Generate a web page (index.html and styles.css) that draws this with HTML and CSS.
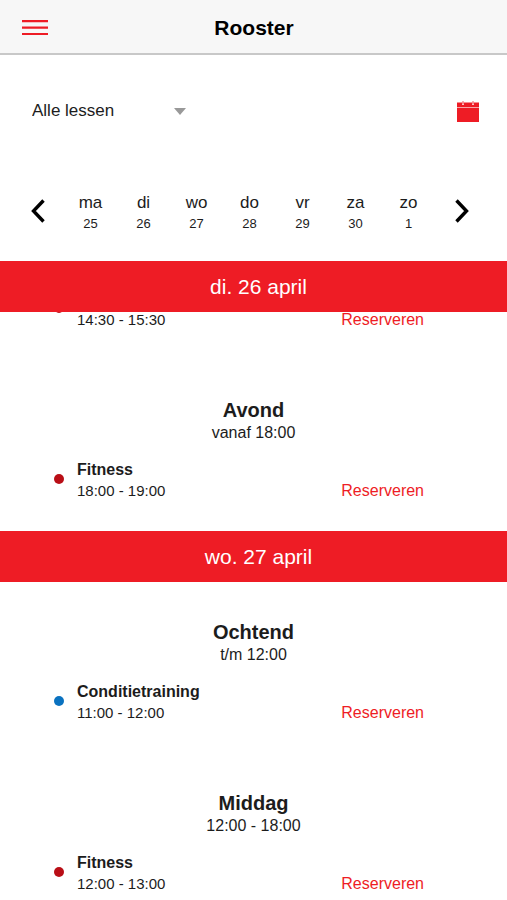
FILE: index.html
```html
<!DOCTYPE html>
<html lang="nl">
<head>
	<meta charset="utf-8">
	<meta name="viewport" content="width=device-width, initial-scale=1">
	<title>Rooster</title>
	<link rel="stylesheet" href="styles.css">
</head>
<body>
	<header class="topbar">
		<button class="menu" type="button" aria-label="Menu">
			<svg width="26" height="16" viewBox="0 0 26 16"><path d="M0 1.2h26M0 7.6h26M0 14h26" stroke="currentColor" stroke-width="2.2"/></svg>
		</button>
		<h1>Rooster</h1>
	</header>

	<div class="filters">
		<div class="lesson-filter">
			<select id="lessons" aria-label="Lessen">
				<option>Alle lessen</option>
			</select>
			<svg class="caret" width="12" height="7" viewBox="0 0 12 7"><path d="M0 0h12L6 7z" fill="#999"/></svg>
		</div>
		<button class="calendar" type="button" aria-label="Kalender">
			<svg width="22" height="21" viewBox="0 0 22 21">
				<path d="M0 1.5h22V21H0z" fill="currentColor"/>
				<path d="M0 6.5h22" stroke="#f9a5a8" stroke-width="1"/>
				<path d="M6 1v3M16 1v3" stroke="#fbc4c6" stroke-width="2"/>
				<path d="M6 0v3M16 0v3" stroke="#f0555b" stroke-width="1"/>
			</svg>
		</button>
	</div>

	<nav class="week">
		<button type="button" aria-label="Vorige week">
			<svg width="14" height="24" viewBox="0 0 14 24"><path d="M12.5 1.5L2.5 12l10 10.5" fill="none" stroke="currentColor" stroke-width="3.4"/></svg>
		</button>
		<a class="weekday" href="#ma">ma<small>25</small></a>
		<a class="weekday" href="#di">di<small>26</small></a>
		<a class="weekday" href="#wo">wo<small>27</small></a>
		<a class="weekday" href="#do">do<small>28</small></a>
		<a class="weekday" href="#vr">vr<small>29</small></a>
		<a class="weekday" href="#za">za<small>30</small></a>
		<a class="weekday" href="#zo">zo<small>1</small></a>
		<button type="button" aria-label="Volgende week">
			<svg width="14" height="24" viewBox="0 0 14 24"><path d="M1.5 1.5L11.5 12l-10 10.5" fill="none" stroke="currentColor" stroke-width="3.4"/></svg>
		</button>
	</nav>

	<main class="schedule">
		<section id="di">
			<h2 class="day">di. 26 april</h2>
			<div class="lessons scrolled">
				<article class="lesson">
					<span class="dot red"></span>
					<div class="info">
						<time>14:30 - 15:30</time>
					</div>
					<a class="reserve" href="#">Reserveren</a>
				</article>
				<div class="period">
					<h3>Avond</h3>
					<p>vanaf 18:00</p>
				</div>
				<article class="lesson">
					<span class="dot red"></span>
					<div class="info">
						<h4>Fitness</h4>
						<time>18:00 - 19:00</time>
					</div>
					<a class="reserve" href="#">Reserveren</a>
				</article>
			</div>
		</section>

		<section id="wo">
			<h2 class="day">wo. 27 april</h2>
			<div class="lessons">
				<div class="period">
					<h3>Ochtend</h3>
					<p>t/m 12:00</p>
				</div>
				<article class="lesson">
					<span class="dot blue"></span>
					<div class="info">
						<h4>Conditietraining</h4>
						<time>11:00 - 12:00</time>
					</div>
					<a class="reserve" href="#">Reserveren</a>
				</article>
				<div class="period">
					<h3>Middag</h3>
					<p>12:00 - 18:00</p>
				</div>
				<article class="lesson">
					<span class="dot red"></span>
					<div class="info">
						<h4>Fitness</h4>
						<time>12:00 - 13:00</time>
					</div>
					<a class="reserve" href="#">Reserveren</a>
				</article>
			</div>
		</section>
	</main>
</body>
</html>
```
FILE: styles.css
```css
/* general */
* {
	box-sizing: border-box;
}
body {
	display: flex;
	flex-direction: column;
	height: 100vh;
	margin: 0;
	background-color: #fff;
	color: #1c1c1c;
	font-family: "Liberation Sans", Arial, sans-serif;
	font-size: 16px;
}
h1, h2, h3, h4, p {
	margin: 0;
}
a {
	color: inherit;
	text-decoration: none;
}
button {
	display: flex;
	align-items: center;
	justify-content: center;
	padding: 0;
	border: 0;
	background: none;
	color: #000;
	cursor: pointer;
}

/* top bar */
.topbar {
	display: grid;
	grid-template-columns: 26px 1fr 26px;
	align-items: center;
	flex: none;
	height: 55px;
	padding: 2px 21px 0 22px;
	border-bottom: 2px solid #c8c8c8;
	background-color: #f7f7f7;
}
.topbar h1 {
	color: #000;
	font-size: 21px;
	line-height: 24px;
	text-align: center;
}
.menu,
.calendar {
	color: #ee1c25;
}

/* lesson filter */
.filters {
	display: flex;
	align-items: center;
	justify-content: space-between;
	flex: none;
	height: 112px;
	padding: 0 28px 0 32px;
}
.lesson-filter {
	display: grid;
	align-items: center;
	width: 154px;
}
.lesson-filter select,
.caret {
	grid-area: 1 / 1;
}
.lesson-filter select {
	appearance: none;
	width: 100%;
	padding: 0 0 2px;
	border: 0;
	background: none;
	color: #1c1c1c;
	font-family: inherit;
	font-size: 17px;
}
.caret {
	justify-self: end;
	pointer-events: none;
}

/* week */
.week {
	display: grid;
	grid-template-columns: repeat(9, 1fr);
	flex: none;
	height: 94px;
	padding: 24px 19px 28px 11px;
}
.week button {
	padding-bottom: 3px;
}
.weekday {
	font-size: 17px;
	line-height: 24px;
	text-align: center;
}
.weekday small {
	display: block;
	font-size: 13px;
	line-height: 18px;
}

/* schedule */
.schedule {
	flex: 1;
	min-height: 0;
	overflow-y: auto;
	scrollbar-width: none;
}
.day {
	position: sticky;
	top: 0;
	z-index: 1;
	padding-left: 10px;
	background-color: #ee1c25;
	color: #fff;
	font-size: 21px;
	font-weight: normal;
	line-height: 51px;
	text-align: center;
}
.scrolled {
	margin-top: -24px;
}
.period {
	padding: 38px 0 15px;
	text-align: center;
}
.period h3 {
	font-size: 20px;
	line-height: 24px;
}
.period p {
	line-height: 22px;
}

/* lesson */
.lesson {
	display: grid;
	grid-template-columns: 10px 1fr auto;
	column-gap: 13px;
	align-items: end;
	height: 72px;
	padding: 0 83px 30px 54px;
}
.info h4 {
	font-size: 16px;
	line-height: 21px;
}
.info time {
	display: block;
	font-size: 15px;
	line-height: 21px;
}
.reserve {
	color: #ee1c25;
	line-height: 21px;
}
.dot {
	align-self: center;
	height: 10px;
	margin-bottom: 3px;
	border-radius: 50%;
}
.red {
	background-color: #b90e16;
}
.blue {
	background-color: #0a72c0;
}
```
